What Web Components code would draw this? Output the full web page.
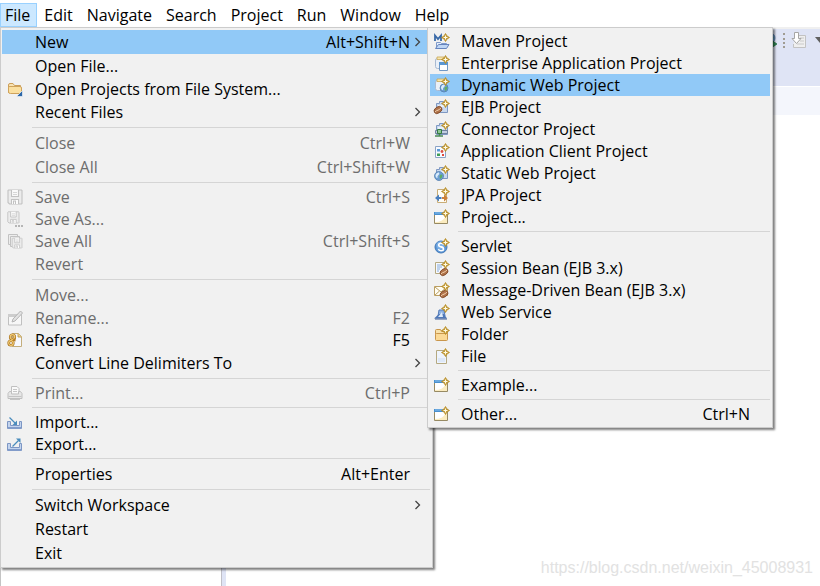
<!DOCTYPE html>
<html lang="en">
<head>
<meta charset="utf-8">
<title>Workbench – File menu</title>
<style>
  html, body { height: 100%; }
  body {
    margin: 0;
    overflow: hidden;
    background: #fff;
    color: #000;
    font: 16px/22px "Open Sans", "Noto Sans", sans-serif;
  }
</style>
</head>
<body>
<work-bench>
  <menu-bar slot="menubar">
    <menu-title open>File</menu-title>
    <menu-title>Edit</menu-title>
    <menu-title>Navigate</menu-title>
    <menu-title>Search</menu-title>
    <menu-title>Project</menu-title>
    <menu-title>Run</menu-title>
    <menu-title>Window</menu-title>
    <menu-title>Help</menu-title>
  </menu-bar>
  <tool-strip slot="toolbar"></tool-strip>

  <menu-popup slot="menu" class="main" aria-label="File">
    <menu-entry shortcut="Alt+Shift+N" submenu active>New</menu-entry>
    <menu-entry>Open File...</menu-entry>
    <menu-entry icon="openProjects">Open Projects from File System...</menu-entry>
    <menu-entry submenu>Recent Files</menu-entry>
    <menu-rule></menu-rule>
    <menu-entry shortcut="Ctrl+W" disabled>Close</menu-entry>
    <menu-entry shortcut="Ctrl+Shift+W" disabled>Close All</menu-entry>
    <menu-rule></menu-rule>
    <menu-entry icon="save" shortcut="Ctrl+S" disabled>Save</menu-entry>
    <menu-entry icon="saveAs" disabled>Save As...</menu-entry>
    <menu-entry icon="saveAll" shortcut="Ctrl+Shift+S" disabled>Save All</menu-entry>
    <menu-entry disabled>Revert</menu-entry>
    <menu-rule></menu-rule>
    <menu-entry disabled>Move...</menu-entry>
    <menu-entry icon="rename" shortcut="F2" disabled>Rename...</menu-entry>
    <menu-entry icon="refresh" shortcut="F5">Refresh</menu-entry>
    <menu-entry submenu>Convert Line Delimiters To</menu-entry>
    <menu-rule></menu-rule>
    <menu-entry icon="print" shortcut="Ctrl+P" disabled>Print...</menu-entry>
    <menu-rule></menu-rule>
    <menu-entry icon="import">Import...</menu-entry>
    <menu-entry icon="export">Export...</menu-entry>
    <menu-rule></menu-rule>
    <menu-entry shortcut="Alt+Enter">Properties</menu-entry>
    <menu-rule></menu-rule>
    <menu-entry submenu>Switch Workspace</menu-entry>
    <menu-entry>Restart</menu-entry>
    <menu-entry>Exit</menu-entry>

    <menu-popup slot="submenu" class="sub" aria-label="New">
      <menu-entry icon="maven">Maven Project</menu-entry>
      <menu-entry icon="enterprise">Enterprise Application Project</menu-entry>
      <menu-entry icon="dynamicWeb" active>Dynamic Web Project</menu-entry>
      <menu-entry icon="ejb">EJB Project</menu-entry>
      <menu-entry icon="connector">Connector Project</menu-entry>
      <menu-entry icon="appClient">Application Client Project</menu-entry>
      <menu-entry icon="staticWeb">Static Web Project</menu-entry>
      <menu-entry icon="jpa">JPA Project</menu-entry>
      <menu-entry icon="wizard">Project...</menu-entry>
      <menu-rule></menu-rule>
      <menu-entry icon="servlet">Servlet</menu-entry>
      <menu-entry icon="sessionBean">Session Bean (EJB 3.x)</menu-entry>
      <menu-entry icon="messageBean">Message-Driven Bean (EJB 3.x)</menu-entry>
      <menu-entry icon="webService">Web Service</menu-entry>
      <menu-entry icon="folder">Folder</menu-entry>
      <menu-entry icon="file">File</menu-entry>
      <menu-rule></menu-rule>
      <menu-entry icon="wizard">Example...</menu-entry>
      <menu-rule></menu-rule>
      <menu-entry icon="wizard" shortcut="Ctrl+N">Other...</menu-entry>
    </menu-popup>
  </menu-popup>

  <water-mark slot="watermark">https://blog.csdn.net/weixin_45008931</water-mark>
</work-bench>

<script>
  // Gold "new" sparkle shared by the wizard icons.
  const star = `<path d="M11.500 .5L13 3L15.500 4.500L13 6L11.500 8.500L10 6L7.500 4.500L10 3Z" fill="#c39a35" stroke="#b88d27" stroke-width=".8" stroke-linejoin="round"/><path d="M11.500 2.500v4M9.500 4.500h4" stroke="#fffbe6" stroke-width="1.100"/>`;
  const bean = (x, y) => `<g transform="translate(${x} ${y})"><ellipse cx="4" cy="4" rx="4.300" ry="3" transform="rotate(-35 4 4)" fill="#b0734a" stroke="#7d4726" stroke-width=".8"/><path d="M1 6C3 3.500 5 5 7 1.800" fill="none" stroke="#f3d3b0" stroke-width="1"/></g>`;
  const globe = (x, y, r) => `<circle cx="${x}" cy="${y}" r="${r}" fill="#6c9fd4" stroke="#557fae" stroke-width=".8"/><path d="M${x - r + 1} ${y - 1}q1 -3 3.500 -2.500q1 1.500 -.5 2.500t-1 3q-2 0 -2 -3z" fill="#d9ebfa"/><path d="M${x + .5} ${y}q2 -2.500 3 -.5q-.5 3 -2.500 3.500z" fill="#5fae62"/>`;
  const jar = `<path d="M1.500 6Q1 3.500 3.500 3.500H10.500Q12.500 4 12.500 6V13.500H3.500Q1.500 13.500 1.500 11.500Z" fill="#eaf0f8" stroke="#a9bad2"/><path d="M3 2h7v2.500H3z" fill="#f7e6b0" stroke="#c9a755" stroke-width=".8"/>`;
  const box = `<path d="M2.500 4.500H5.500V2.500H9.500V4.500H13.500V13.500H2.500Z" fill="#c9d9ef" stroke="#7e98c2"/><path d="M4 6h9v2H4z" fill="#e9f1fb"/>`;
  const sheet = `<path d="M1.500 3.500H11.500V14.500H1.500Z" fill="#f7faff" stroke="#8ba3c6"/>`;
  const disk = (x, y, s) => `<g transform="translate(${x} ${y}) scale(${s})" fill="none" stroke="#c2c2c2" stroke-width="1.100"><path d="M1.500 1H14.500L15 1.500V14.500L14.500 15H2.500L1 13.500V1.500Z" fill="#ececec"/><path d="M4.500 1V7.500H11.500V1" fill="#fafafa"/><path d="M6 3.500h4M6 5.500h4" stroke="#d6d6d6"/><path d="M4.500 15V10.500H11.500V15M6.500 15V12H8.500V15" fill="#fff"/></g>`;

  const icons = {
    openProjects: `<path d="M1.500 12V4Q1.500 2.500 3 2.500H6L7.500 4.500H13.500V7" fill="#f8e3b4" stroke="#cd9f58"/><path d="M1.500 6.500Q1.500 5.500 3 5.500H13Q14.500 5.500 14.500 7V11.500Q14.500 12.500 13 12.500H3.500Q1.500 12.500 1.500 11Z" fill="#fbe0a0" stroke="#cfa35c"/><path d="M15.500 9.500V15.500H9.500Z" fill="#2d67a8" stroke="#fff" stroke-width=".6"/>`,
    save: disk(0, 0, 1),
    saveAs: disk(0, 0, .8) + `<path d="M8 14h2v2H8zM11 14h2v2h-2zM14 14h2v2h-2z" fill="#b5b5b5"/>`,
    saveAll: `<path d="M1.500 1.500h9v10h-9z" fill="#ededed" stroke="#c2c2c2"/><path d="M3.500 3.500h9v10h-9z" fill="#ededed" stroke="#c2c2c2"/>` + disk(4.500, 4.500, .7),
    rename: `<path d="M1.500 4.500H14.500V15H1.500Z" fill="#f7f7f7" stroke="#c0c0c0"/><path d="M1 4h9v3H1z" fill="#cdcdcd"/><path d="M5 12l1-3 7.500-8 2 2-7.500 8z" fill="#e2e2e2" stroke="#b5b5b5"/>`,
    refresh: `<path d="M5.500 1.500H11.500L14.500 4.500V14.500H5.500Z" fill="#f7f9ff" stroke="#c4ae7c"/><path d="M11 1.500V5H14.500" fill="#ecd18b" stroke="#c4a45c"/><circle cx="5.500" cy="5" r="2.300" fill="none" stroke="#a8711c" stroke-width="2.600"/><circle cx="4" cy="11" r="2.300" fill="none" stroke="#a8711c" stroke-width="2.600"/><circle cx="5.500" cy="5" r="2.300" fill="none" stroke="#f3cd77" stroke-width="1.200"/><circle cx="4" cy="11" r="2.300" fill="none" stroke="#f3cd77" stroke-width="1.200"/><path d="M5 8.500L8.500 5.500V9.500z" fill="#b57d22"/>`,
    print: `<path d="M4.500 8V1.500H10L12 3.500V8" fill="#fafafa" stroke="#c0c0c0"/><path d="M6 4.500h4M6 6.500h4" stroke="#c6c6c6"/><path d="M1 8.500L2.500 6.500H4.500V9H11.500V6.500H13.500L15 8.500V13.500H1Z" fill="#e6e6e6" stroke="#c0c0c0"/><path d="M1.500 11.500h13M3 14.500h10" stroke="#c4c4c4"/>`,
    import: `<path d="M.5 7.500H3.500V11.500H12.500V7.500H14.500V14.500H.5Z" fill="#c3d4ee" stroke="#7c96c4"/><path d="M1 13h13v2H1z" fill="#829cca"/><path d="M2.500 3.500L8.500 9.500" stroke="#4a8cbc" stroke-width="1.200"/><path d="M10 6.500v4.500H5.500z" fill="#4a8cbc"/>`,
    export: `<path d="M.5 7.500H3.500V11.500H12.500V7.500H14.500V14.500H.5Z" fill="#c3d4ee" stroke="#7c96c4"/><path d="M1 13h13v2H1z" fill="#829cca"/><path d="M5.500 10.500L11.500 4.500" stroke="#4a8cbc" stroke-width="1.200"/><path d="M9 2.500H13.500V7z" fill="#4a8cbc"/>`,
    maven: `<path d="M1 8V2.500L4 6L7 2.500V8" fill="none" stroke="#3a6aa8" stroke-width="1.800"/><path d="M2.500 15V9.500H6.500L7.500 10.500H12.500V12" fill="#e5eefb" stroke="#7f9aca"/><path d="M1.500 15.500L4.500 11.500H15L12.500 15.500Z" fill="#bfd6f5" stroke="#6684bd"/>` + star,
    enterprise: jar + `<path d="M5.500 7.500H13.500V15.500H5.500Z" fill="#fff" stroke="#6f97c5"/><path d="M5 7h9v3H5z" fill="#5b97d2"/>` + star,
    dynamicWeb: jar + globe(10, 11, 4) + star,
    ejb: box + bean(0, 7) + star,
    connector: box + `<path d="M1.500 9.500h12v3h-12z" fill="#c2cee2" stroke="#71839f"/><path d="M3.500 8.500h4v4h-4z" fill="#8ec794" stroke="#357a42"/><path d="M5.500 13v2M1 15h8" stroke="#4a8b55" stroke-width="1.500"/>` + star,
    appClient: sheet + `<path d="M3 6h3v2.500H3z" fill="#5b9ad6"/><path d="M3 10.500h3V13H3z" fill="#3f9d56"/><circle cx="8" cy="8.500" r="1.400" fill="#dd5144"/><path d="M8 11h2v2H8z" fill="#e0493c"/>` + star,
    staticWeb: box + globe(5, 11, 4.500) + star,
    jpa: `<path d="M3.500 2.500H10.500L12.500 4.500V15.500H3.500Z" fill="#fffdf5" stroke="#c9ad76"/><path d="M1 11L5 7.500V10H7.500V12H5V14.500Z" fill="#4a7fbe"/><path d="M14 11L10 7.500V10H8V12H10V14.500Z" fill="#cc8139"/>` + star,
    wizard: `<path d="M.5 3.500H13.500V14.500H.5Z" fill="#fff" stroke="#978a63"/><path d="M1 13Q9 13 11 8L13 7V14H1Z" fill="#fbecc0"/><path d="M0 3h14v3H0z" fill="#4a90cf"/><path d="M1 4h8" stroke="#8cc2ef"/>` + star,
    servlet: `<circle cx="7" cy="9" r="6" fill="#5c97d6" stroke="#4279b8"/><circle cx="6.500" cy="7.500" r="4" fill="#7db0e6"/><path d="M9.500 6.700Q9.200 5.300 7 5.300Q4.700 5.300 4.700 7Q4.700 8.500 7 8.900Q9.500 9.300 9.500 11Q9.500 12.700 7 12.700Q4.700 12.700 4.400 11.200" fill="none" stroke="#fff" stroke-width="1.600"/>` + star,
    sessionBean: `<path d="M1.500 2.500H11.500V13.500H1.500Z" fill="#f6f9ff" stroke="#b5a981"/><path d="M3 5h6M3 7h5M3 9h3M3 11h2" stroke="#86abd8"/>` + bean(6, 8) + star,
    messageBean: `<path d="M.5 4.500H13.500V13.500H.5Z" fill="#fffdf3" stroke="#bb9f62"/><path d="M1 5L7 10L13 5M1 13L5.500 9" fill="none" stroke="#bb9f62"/>` + bean(6, 8) + star,
    webService: `<path d="M5 6h5l1 6h-7z" fill="#8fb3e4" stroke="#557bb7"/><path d="M0 14.500L5 10h5l3 4.500z" fill="#4f78b8"/><path d="M4 13L8 8l1 5z" fill="#dfebfa"/><path d="M1 15h12" stroke="#3d5c98"/>` + star,
    folder: `<path d="M1.500 13V4.500Q1.500 3.500 2.500 3.500H6.500L7.500 5.500H13.500V8" fill="#f8e1aa" stroke="#c7954b"/><path d="M1.500 8.500Q1.500 7.500 2.500 7.500H13.500V13.500Q13.500 14.500 12.500 14.500H2.500Q1.500 14.500 1.500 13.500Z" fill="#fbd995" stroke="#c9964c"/>` + star,
    file: `<path d="M2.500 2.500H10L12.500 5V15.500H2.500Z" fill="#eef4fd" stroke="#b5a981"/><path d="M4 10h7v4H4z" fill="#dde8f8"/>` + star
  };

  const define = (tag, html, setup) => {
    const template = document.createElement('template');
    template.innerHTML = html;
    customElements.define(tag, class extends HTMLElement {
      constructor() {
        super();
        this.attachShadow({ mode: 'open' }).append(template.content.cloneNode(true));
      }
      connectedCallback() { if (setup) setup(this, this.shadowRoot); }
    });
  };

  define('work-bench', `
    <style>
      :host { display: flex; flex-direction: column; height: 100vh; position: relative; overflow: hidden; }
      .tabs { height: 28px; background: #f4f6fc; border-top: 1px solid #fff; }
      .body { flex: 1; display: flex; border-left: 1px solid #c4c4c4; }
      .side { flex: 0 1 220px; }
      .sash { flex: 0 0 4px; background: #dfe4f5; border-left: 1px solid #c0c0c8; }
      ::slotted([slot="menu"]) { position: absolute; left: 0; top: 27px; }
      ::slotted([slot="watermark"]) { position: absolute; right: 7px; bottom: 6px; }
    </style>
    <slot name="menubar"></slot>
    <slot name="toolbar"></slot>
    <div class="tabs"></div>
    <div class="body"><div class="side"></div><div class="sash"></div></div>
    <slot name="menu"></slot>
    <slot name="watermark"></slot>`);

  define('menu-bar', `
    <style>
      :host { display: block; }
      nav { display: flex; padding-top: 3px; border-bottom: 2px solid #f0f0f0; }
    </style>
    <nav role="menubar"><slot></slot></nav>`);

  define('menu-title', `
    <style>
      :host { display: block; }
      button { display: block; height: 24px; margin: 0; padding: 0 6px; border: 1px solid transparent; background: none; font: inherit; color: inherit; line-height: 22px; }
      :host([open]) button { background: #cce8ff; border-color: #99d1ff; padding: 0 6px 0 4px; }
    </style>
    <button type="button" role="menuitem"><slot></slot></button>`);

  define('tool-strip', `
    <style>
      :host { display: block; height: 57px; background: #dfe4f5; }
      .tools { display: flex; justify-content: flex-end; align-items: center; height: 22px; }
      button { display: block; margin: 0; padding: 0; border: 0; background: none; }
      svg { display: block; }
      .grip { margin: 0 5px; }
      .arrow { margin-left: 8px; }
    </style>
    <div class="tools" role="toolbar">
      <button type="button" aria-label="Web browser"><svg width="16" height="16">${globe(9, 6, 5)}<path d="M6 11h5V8.500l5 3.500-5 3.500V13H6z" fill="#34945a" stroke="#1d6b3c" stroke-width=".7"/></svg></button>
      <svg class="grip" width="4" height="18"><path d="M1 2h2v2H1zM1 7h2v2H1zM1 11h2v2H1zM1 15h2v2H1z" fill="#a09c92"/></svg>
      <button type="button" aria-label="Next annotation"><svg width="16" height="17"><path d="M4.500 3.500H14.500V15.500H2.500V12" fill="#efefef" stroke="#c2c2c2"/><path d="M9 6h4M9 9h4M6 12h7" stroke="#c9c9c9"/><path d="M3.500.5H7.500V6.500H10L5.500 11.500L1 6.500H3.500Z" fill="#fff" stroke="#a6a6a6"/></svg></button>
      <button type="button" class="arrow" aria-label="More"><svg width="5" height="10"><path d="M0 2h10L5 8z" fill="#606060"/></svg></button>
    </div>`);

  define('menu-popup', `
    <style>
      :host { display: block; box-sizing: border-box; }
      :host(.main) { --gutter: 30px; --icon-inset: 5px; min-width: 433px; z-index: 1; }
      :host(.sub) { --gutter: 28px; --icon-inset: 4px; min-width: 346px; }
      .panel { background: #f1f1f1; border: 1px solid #ccc; padding: 2px; box-shadow: 2px 2px 2px rgba(0,0,0,.5); }
      :host(.main) .panel { padding-left: 1px; }
      ::slotted([slot="submenu"]) { position: absolute; left: calc(100% - 6px); top: 0; }
    </style>
    <div class="panel" role="menu"><slot></slot></div>
    <slot name="submenu"></slot>`);

  define('menu-rule', `
    <style>
      :host { display: block; padding: 3px 0; }
      hr { margin: 0 0 0 var(--gutter); border: 0; height: 1px; background: #d5d5d5; }
    </style>
    <hr>`);

  define('menu-entry', `
    <style>
      :host { display: block; }
      button {
        display: flex; align-items: center; width: 100%; height: 24px; margin: 0; padding: 0 20px 0 0;
        border: 0; background: none; color: inherit; font: inherit; text-align: left; white-space: nowrap; position: relative;
      }
      :host([icon]) button { height: 22px; }
      :host([active]) button { background: #91c9f7; }
      button:disabled { color: #6d6d6d; }
      .icon { flex: none; box-sizing: border-box; width: calc(var(--gutter) + 3px); padding-left: var(--icon-inset); }
      .icon svg { display: block; width: 16px; height: 16px; overflow: visible; }
      .label { flex: 1; padding-right: 20px; }
      .chevron { position: absolute; right: 9px; top: 7px; display: none; }
      :host([submenu]) .chevron { display: block; }
    </style>
    <button type="button" role="menuitem">
      <span class="icon"></span><span class="label"><slot></slot></span><span class="keys"></span>
      <svg class="chevron" width="7" height="10"><path d="M1.500 1L5.500 5L1.500 9" fill="none" stroke="#444" stroke-width="1.300"/></svg>
    </button>`, (host, root) => {
      const name = host.getAttribute('icon');
      if (name) root.querySelector('.icon').innerHTML = `<svg viewBox="0 0 16 16" aria-hidden="true">${icons[name]}</svg>`;
      root.querySelector('.keys').textContent = host.getAttribute('shortcut') || '';
      root.querySelector('button').disabled = host.hasAttribute('disabled');
      if (host.hasAttribute('submenu')) root.querySelector('button').setAttribute('aria-haspopup', 'menu');
    });

  define('water-mark', `
    <style>
      :host { display: block; font: 16px/24px "Liberation Sans", Arial, sans-serif; color: #e2e2e2; }
    </style>
    <slot></slot>`);
</script>
</body>
</html>
